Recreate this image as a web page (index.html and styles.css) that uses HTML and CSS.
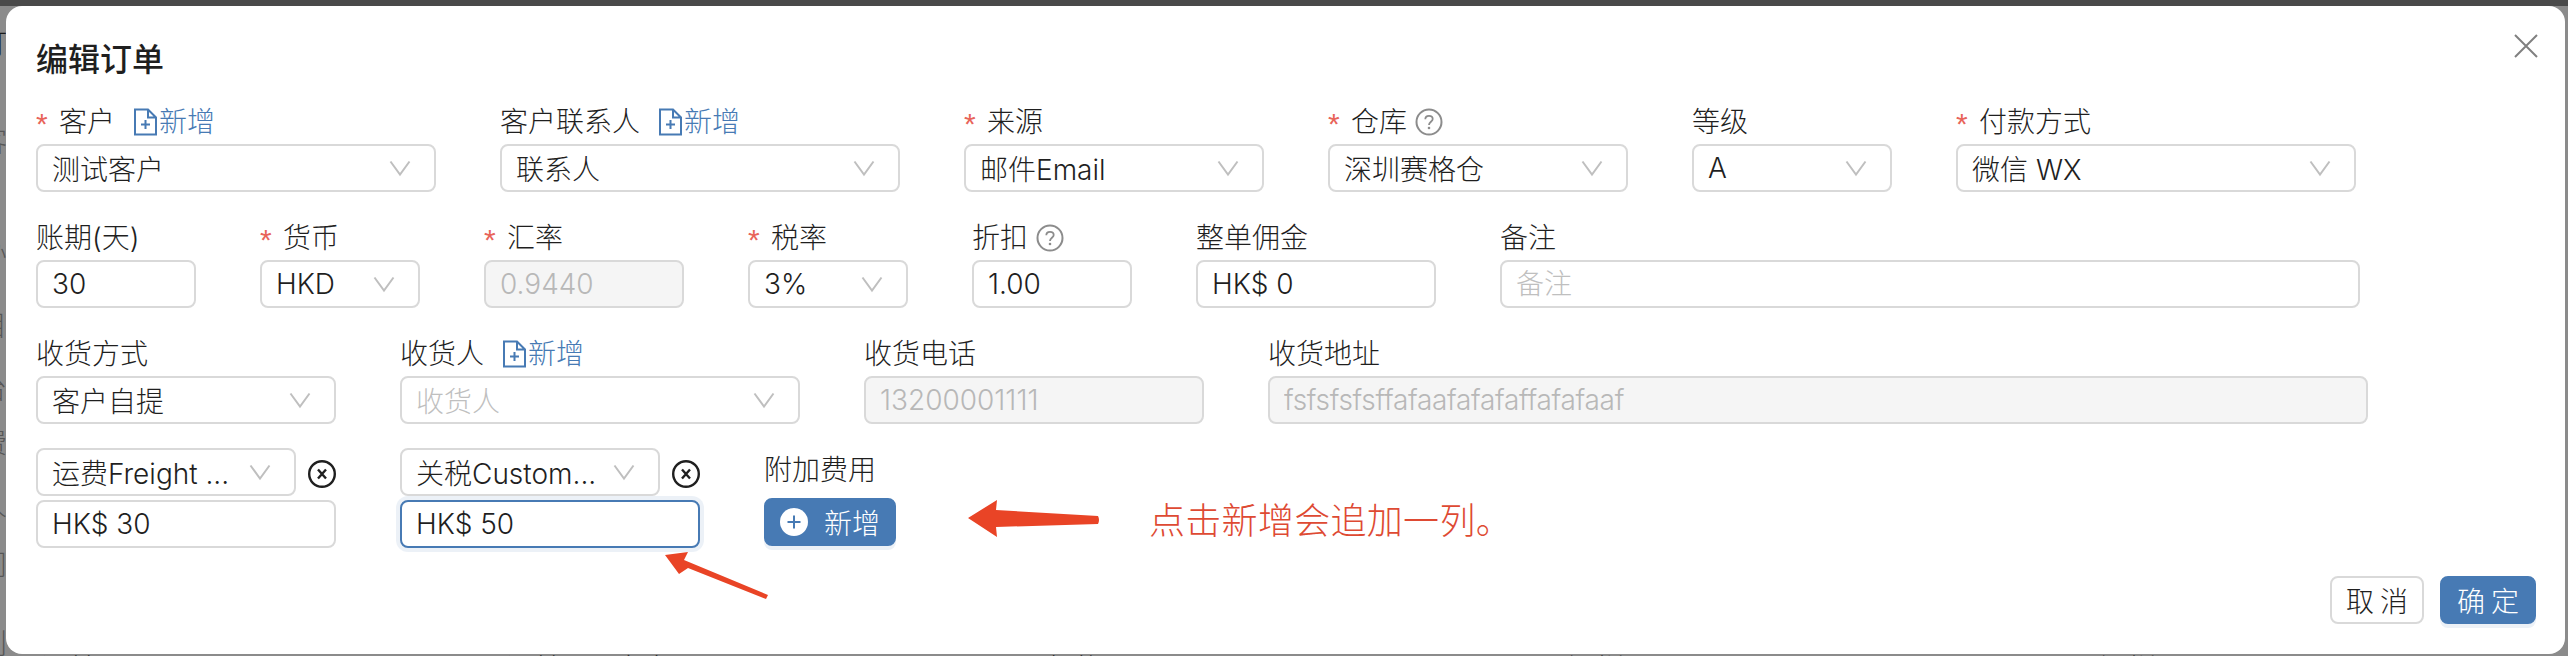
FILE: index.html
```html
<!DOCTYPE html>
<html lang="zh-CN">
<head>
<meta charset="utf-8">
<title>编辑订单</title>
<link rel="stylesheet" href="styles.css">
</head>
<body>
<svg class="defs" width="0" height="0" aria-hidden="true">
  <symbol id="chev" viewBox="0 0 24 24"><path d="M2.500 5.500 12 18.500 21.500 5.500" fill="none" stroke="currentColor" stroke-width="2"/></symbol>
  <symbol id="file-add" viewBox="0 0 28 28"><path d="M4 1.500H17L25 9.500V26.500H4Z M17 1.500V9.500H25 M14.500 12V21 M10 16.500H19" fill="none" stroke="currentColor" stroke-width="2"/></symbol>
  <symbol id="help" viewBox="0 0 28 28"><circle cx="14" cy="14" r="12.500" fill="none" stroke="currentColor" stroke-width="2"/><path d="M10.300 11.200C10.300 9 12 7.800 14 7.800C16.100 7.800 17.700 9.100 17.700 11C17.700 13.600 14 14 14 16.900" fill="none" stroke="currentColor" stroke-width="1.800"/><circle cx="14" cy="20" r="1.300" fill="currentColor"/></symbol>
  <symbol id="remove" viewBox="0 0 28 28"><circle cx="14" cy="14" r="12.800" fill="none" stroke="currentColor" stroke-width="2.400"/><path d="M10 9.500 18 18.500 M18 9.500 10 18.500" fill="none" stroke="currentColor" stroke-width="2.400"/></symbol>
  <symbol id="plus-circle" viewBox="0 0 28 28"><circle cx="14" cy="14" r="14" fill="#fff"/><path d="M14 7.500V20.500 M7.500 14H20.500" fill="none" stroke="#477ab4" stroke-width="2"/></symbol>
</svg>

<div class="page">
  <div class="topbar"></div>
  <div class="side">
    <span class="side-dark">订</span><span>客</span><span>：</span><span>办</span><span>目</span><span>台</span><span>费</span><span>人</span><span>闸</span><span>别</span>
  </div>
  <div class="under-row">
    <span></span><span>订单号</span><span>20231108</span><span>订单</span><span>日</span><span>客户</span><span>■</span><span>邮件</span><span>日</span><span>深圳</span><span>20231108</span><span>深圳</span><span>20231108</span>
  </div>

  <section class="modal">
    <button class="close" aria-label="关闭"><svg class="close-icon" viewBox="0 0 24 24"><path d="M1 1 23 23 M23 1 1 23" fill="none" stroke="currentColor" stroke-width="2"/></svg></button>
    <h1 class="title">编辑订单</h1>

    <form class="form">
      <div class="row">
        <div class="field w400">
          <div class="label"><i class="req">*</i>客户<a class="add-link"><svg class="icon28"><use href="#file-add"/></svg>新增</a></div>
          <div class="select"><span>测试客户</span><svg class="chev"><use href="#chev"/></svg></div>
        </div>
        <div class="field w400">
          <div class="label">客户联系人<a class="add-link"><svg class="icon28"><use href="#file-add"/></svg>新增</a></div>
          <div class="select"><span>联系人</span><svg class="chev"><use href="#chev"/></svg></div>
        </div>
        <div class="field w300">
          <div class="label"><i class="req">*</i>来源</div>
          <div class="select"><span>邮件Email</span><svg class="chev"><use href="#chev"/></svg></div>
        </div>
        <div class="field w300">
          <div class="label"><i class="req">*</i>仓库<svg class="icon28 help"><use href="#help"/></svg></div>
          <div class="select"><span>深圳赛格仓</span><svg class="chev"><use href="#chev"/></svg></div>
        </div>
        <div class="field w200">
          <div class="label">等级</div>
          <div class="select"><span>A</span><svg class="chev"><use href="#chev"/></svg></div>
        </div>
        <div class="field w400">
          <div class="label"><i class="req">*</i>付款方式</div>
          <div class="select"><span>微信 WX</span><svg class="chev"><use href="#chev"/></svg></div>
        </div>
      </div>

      <div class="row">
        <div class="field w160">
          <div class="label">账期(天)</div>
          <input class="input" value="30">
        </div>
        <div class="field w160">
          <div class="label"><i class="req">*</i>货币</div>
          <div class="select"><span>HKD</span><svg class="chev"><use href="#chev"/></svg></div>
        </div>
        <div class="field w200">
          <div class="label"><i class="req">*</i>汇率</div>
          <input class="input" value="0.9440" disabled>
        </div>
        <div class="field w160">
          <div class="label"><i class="req">*</i>税率</div>
          <div class="select"><span>3%</span><svg class="chev"><use href="#chev"/></svg></div>
        </div>
        <div class="field w160">
          <div class="label">折扣<svg class="icon28 help"><use href="#help"/></svg></div>
          <input class="input" value="1.00">
        </div>
        <div class="field w240">
          <div class="label">整单佣金</div>
          <input class="input" value="HK$ 0">
        </div>
        <div class="field w860">
          <div class="label">备注</div>
          <input class="input" placeholder="备注">
        </div>
      </div>

      <div class="row">
        <div class="field w300">
          <div class="label">收货方式</div>
          <div class="select"><span>客户自提</span><svg class="chev"><use href="#chev"/></svg></div>
        </div>
        <div class="field w400">
          <div class="label">收货人<a class="add-link"><svg class="icon28"><use href="#file-add"/></svg>新增</a></div>
          <div class="select"><span class="placeholder">收货人</span><svg class="chev"><use href="#chev"/></svg></div>
        </div>
        <div class="field w340">
          <div class="label">收货电话</div>
          <input class="input" value="13200001111" disabled>
        </div>
        <div class="field w1100">
          <div class="label">收货地址</div>
          <input class="input addr" value="fsfsfsfsffafaafafafaffafafaaf" disabled>
        </div>
      </div>

      <div class="row">
        <div class="field w300 fee">
          <div class="fee-head">
            <div class="select w260"><span class="clip">运费Freight ...</span><svg class="chev"><use href="#chev"/></svg></div>
            <svg class="icon28 remove"><use href="#remove"/></svg>
          </div>
          <input class="input" value="HK$ 30">
        </div>
        <div class="field w300 fee">
          <div class="fee-head">
            <div class="select w260"><span class="clip">关税Custom...</span><svg class="chev"><use href="#chev"/></svg></div>
            <svg class="icon28 remove"><use href="#remove"/></svg>
          </div>
          <input class="input focused" value="HK$ 50">
        </div>
        <div class="field">
          <div class="label">附加费用</div>
          <button type="button" class="btn primary add-btn"><svg class="icon28"><use href="#plus-circle"/></svg>新增</button>
        </div>
      </div>
    </form>

    <footer class="footer">
      <button class="btn cancel">取消</button>
      <button class="btn primary ok">确定</button>
    </footer>
  </section>

  <svg class="arrow arrow-add" viewBox="0 0 150 55"><path d="M8 28 37 10 36 20 138 26Q140 30 138 34L36 37 37 47Z" fill="#e94426"/></svg>
  <svg class="arrow arrow-input" viewBox="0 0 115 60"><path d="M5 10 28 7 24 15 108 50 106 54 28 23 19 29Z" fill="#e94426"/></svg>
  <div class="note">点击新增会追加一列。</div>
</div>
</body>
</html>
```

FILE: styles.css
```css
* { box-sizing: border-box; }
html, body { margin: 0; padding: 0; }
body {
  width: 2568px;
  height: 656px;
  overflow: hidden;
  background: #8b8b8b;
  font-family: Inter, "Noto Sans CJK SC", sans-serif;
  font-size: 28px;
  font-weight: 300;
  color: #1f1f1f;
}
.defs { position: absolute; }
.page { position: relative; width: 2568px; height: 656px; overflow: hidden; display: flex; flex-direction: column; }

/* dimmed page behind the dialog */
.topbar { height: 6px; flex: none; background: #4a4a4a; }
.side {
  flex: none;
  height: 640px;
  padding-top: 38px;
  margin-left: -21px;
  display: grid;
  grid-template-rows: 98px 63px 48px 73px 63px 54px 63px 59px 79px 20px;
  line-height: 0;
  color: #565656;
}
.side-dark { color: #1a1a1a; }
.under-row {
  position: absolute;
  left: 0;
  top: 651px;
  display: grid;
  grid-template-columns: 40px 125px 340px 30px 80px 405px 25px 110px 413px 72px 460px 100px 300px;
  line-height: 36px;
  color: #2a2a2a;
  white-space: nowrap;
}

/* dialog */
.modal {
  position: absolute;
  left: 6px;
  top: 6px;
  width: 2559px;
  height: 648px;
  padding: 32px 29px 30px 30px;
  background: #fff;
  border-radius: 16px;
  display: flex;
  flex-direction: column;
}
.close {
  position: absolute;
  right: 27px;
  top: 28px;
  width: 24px;
  height: 24px;
  padding: 0;
  border: 0;
  background: none;
  color: #808080;
}
.close-icon { display: block; width: 24px; height: 24px; }
.title { margin: 0 0 18px; font-size: 32px; line-height: 44px; font-weight: 500; }
.form { display: flex; flex-direction: column; gap: 24px; }
.row { display: flex; gap: 64px; align-items: flex-start; }
.field { flex: none; }
.w160 { width: 160px; }
.w200 { width: 200px; }
.w240 { width: 240px; }
.w260 { width: 260px; }
.w300 { width: 300px; }
.w340 { width: 340px; }
.w400 { width: 400px; }
.w860 { width: 860px; }
.w1100 { width: 1100px; }

.label { height: 44px; line-height: 44px; display: flex; align-items: center; white-space: nowrap; }
.req { width: 23px; flex: none; color: #e8645a; font-family: "Liberation Sans", sans-serif; font-weight: 400; font-style: normal; font-size: 30px; transform: translateY(2px); }
.add-link { display: flex; align-items: center; margin-left: 16px; color: #477ab4; }
.icon28 { display: block; width: 28px; height: 28px; flex: none; }
.help { margin-left: 8px; color: #8c8c8c; }

.select, .input {
  display: flex;
  align-items: center;
  width: 100%;
  height: 48px;
  padding: 0 14px;
  border: 2px solid #d9d9d9;
  border-radius: 8px;
  background: #fff;
  color: #1f1f1f;
  font: inherit;
  outline: 0;
}
.select { justify-content: space-between; padding-right: 22px; }
.chev { display: block; width: 24px; height: 24px; color: #bfbfbf; flex: none; }
.placeholder, .input::placeholder { color: #bfbfbf; opacity: 1; }
.input:disabled { background: #f5f5f5; color: #b8b8b8; }
.addr { letter-spacing: -0.3px; }
.clip { white-space: nowrap; overflow: hidden; }

.fee { display: flex; flex-direction: column; gap: 4px; }
.fee-head { display: flex; align-items: center; justify-content: space-between; }
.remove { color: #1f1f1f; margin-top: 4px; }
.select.w260 { width: 260px; }
.focused { border-color: #477ab4; box-shadow: 0 0 0 4px rgba(71, 122, 180, 0.1); }

.btn {
  display: inline-flex;
  align-items: center;
  justify-content: center;
  height: 48px;
  padding: 0;
  border: 2px solid #d9d9d9;
  border-radius: 8px;
  background: #fff;
  color: #1f1f1f;
  font: inherit;
}
.primary {
  border-color: #477ab4;
  background: #477ab4;
  color: #fff;
  box-shadow: 0 4px 0 rgba(71, 122, 180, 0.1);
}
.add-btn { width: 132px; margin-top: 6px; gap: 16px; }
.footer { margin-top: 28px; display: flex; justify-content: flex-end; gap: 16px; }
.cancel { width: 94px; letter-spacing: 6px; text-indent: 6px; }
.ok { width: 96px; letter-spacing: 6px; text-indent: 6px; }

/* red annotations drawn over the screenshot */
.arrow { position: absolute; display: block; }
.arrow-add { left: 960px; top: 490px; width: 150px; height: 55px; }
.arrow-input { left: 660px; top: 545px; width: 115px; height: 60px; }
.note { position: absolute; left: 1149px; top: 498px; font-size: 36px; line-height: 46px; letter-spacing: 0.3px; color: #de4a33; white-space: nowrap; }
```
